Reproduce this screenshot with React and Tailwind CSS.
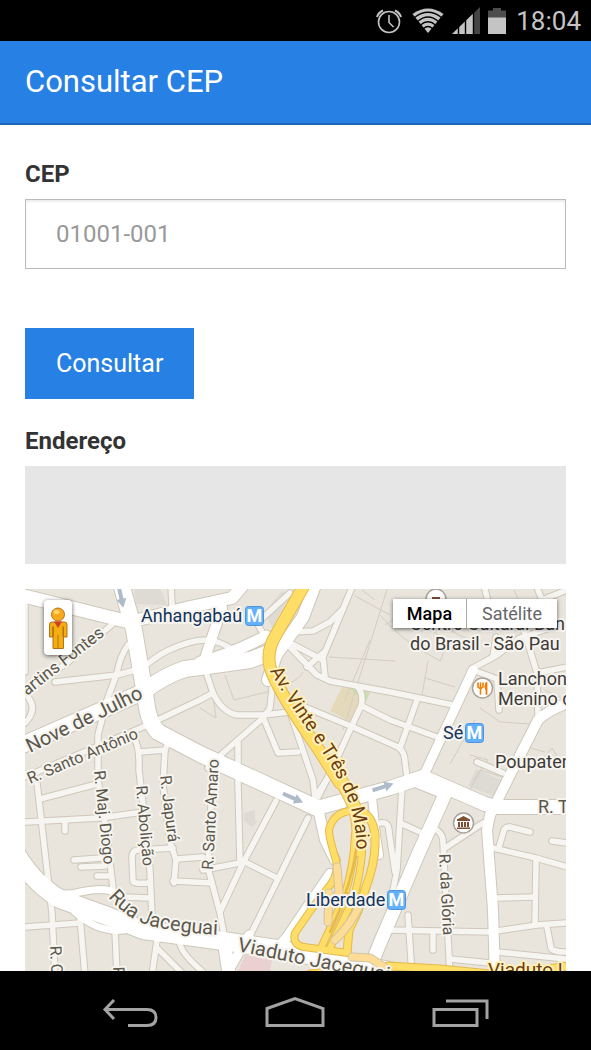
import React, { useState } from 'react';

// Narrow streets, drawn with a thin casing
const streets = [
  'M25 600V672',
  'M115 622L67 663L25 692',
  'M55 682L117 675L143 668Q155 657 167 651Q190 640 205 640Q220 640 236 652',
  'M128 645Q120 656 117 673L107 700L98 735L98 780L107 837L113 888',
  'M28 697Q38 710 25 723',
  'M25 777L143 727L200 700L213 693L207 675',
  'M133 737Q140 745 139 770L144 813L150 870L152 917',
  'M140 752L165 750L170 738',
  'M165 750L163 785L170 842L176 860L174 883',
  'M213 693Q222 712 237 715L263 715L290 712L313 780L315 797',
  'M273 680L270 708L263 718L223 753L208 768',
  'M263 717L278 753L298 752',
  'M238 743V783L240 863',
  'M353 585L323 657L325 677',
  'M288 645L317 675L330 681L390 692L453 705',
  'M290 643L323 660',
  'M307 667L323 653',
  'M290 632L313 631L330 622L343 609',
  'M300 705L353 727L398 747Q405 752 405 762L407 777',
  'M358 687Q364 695 361 706L333 767L318 797',
  'M362 706L390 720L437 737',
  'M417 700L400 748',
  'M290 593L257 623L265 637',
  'M171 585L172 606',
  'M484 585L489 606',
  'M536 585L542 600L567 590',
  'M523 627L537 673L538 717',
  'M537 673L567 667',
  'M473 668L497 655L520 638L556 626',
  'M496 637L493 656',
  'M473 670L497 679L499 710',
  'M477 762L503 773',
  'M25 822L100 818L143 812',
  'M37 783L52 913L55 975',
  'M40 799L97 784',
  'M65 821V831',
  'M74 860L102 858',
  'M81 867L105 866',
  'M97 876L109 876',
  'M173 848L139 850Q132 850 132 857L133 881Q133 884 148 883',
  'M123 897L150 898',
  'M177 859L203 857',
  'M173 881L212 883',
  'M25 927L80 923',
  'M80 917L85 975',
  'M115 930L117 975',
  'M157 940L152 975',
  'M157 948L184 975',
  'M180 944Q182 954 203 972',
  'M276 801L243 863L220 912',
  'M308 818L250 936',
  'M203 870L245 862L277 878',
  'M213 765L208 868L220 913L225 940',
  'M315 797L337 765',
  'M380 823Q389 821 389 832L395 872',
  'M402 787L397 870L393 890',
  'M400 823L420 832',
  'M433 828Q443 832 443 842L445 880L450 975',
  'M445 848L483 823',
  'M387 930L490 932L537 925L567 923',
  'M408 915L412 975',
  'M433 933V950',
  'M450 959L490 963',
  'M493 848L536 858L567 867',
  'M499 847L504 830Q505 827 510 827L530 832',
  'M552 841L567 843',
  'M536 860L535 923',
  'M495 898L535 897',
  'M547 927L551 948Q552 952 567 952',
  'M497 952L567 959',
];

// White avenues: path and stroke width
const avenues = [
  ['M20 595L125 621', 13],
  ['M120 580L134 630L146 700Q148 722 158 732L200 754L317 808', 16],
  ['M20 746L143 692Q165 675 185 669Q215 665 250 660L266 654', 16],
  ['M200 662Q232 654 266 636', 11],
  ['M138 620L190 607L232 598L243 585', 12],
  ['M222 608L205 658', 10],
  ['M315 585L303 617L276 655L268 680', 12],
  ['M317 808L390 788L423 777L485 804L495 807L570 807', 14],
  ['M473 670L423 777', 9],
  ['M447 790L420 850L380 943L365 980', 13],
  ['M413 782L445 795', 8],
  ['M570 702Q547 711 538 720L510 775L490 815L487 830L493 910L495 980', 10],
  ['M318 808L325 840L335 860', 10],
  ['M330 874L288 936L278 948', 10],
  ['M372 797L376 835L379 855', 8],
  ['M10 842Q28 880 60 899L110 917L143 930L223 941L283 950L400 973', 18],
  ['M50 892Q68 896 80 892Q105 887 113 892L134 914', 7],
  ['M75 912Q98 933 124 930', 7],
  ['M224 940L230 980', 13],
  ['M249 935L232 965', 9],
];

// The expressway and its ramps
const highways = [
  ['M306 582L277 633Q266 650 270 667Q277 690 317 747L340 783', 13],
  ['M334 770Q348 790 354 806Q361 826 357 850', 14],
  ['M355 808Q373 814 375 835Q376 855 370 875L358 911L349 930L347 952', 9],
  ['M350 811Q333 813 329 830Q329 838 336 860Q339 872 331 884L313 907L295 933Q292 945 304 947L348 953', 8],
  ['M355 835Q354 865 344 898L321 948', 8],
  ['M362 835Q364 860 354 897L330 948', 8],
  ['M310 974L330 972M388 966L440 969L500 975L570 966', 9],
];

const tunnels = [
  'M337 867L339 893L332 904',
  'M329 893L328 922',
  'M361 903Q350 926 335 940',
  'M352 957L370 958L384 967',
];

const thinLines = [
  'M355 596L390 615M343 730L390 580M329 657L395 661M380 615Q400 640 440 661Q452 640 430 630',
  'M425 678L455 687M428 661L422 695M480 708L500 722L530 724M450 764L475 720M470 755L488 760L474 780',
  'M225 675L234 700L275 690Q300 680 303 672M200 708L216 718L213 695',
  'M395 605L470 640M362 590L375 600M514 590L520 604M545 690L566 700M540 762L552 748L566 770',
  'M385 625L440 590M345 700L370 640M520 745L545 752M470 790L480 770L505 778',
];

const Street = ({ children, size = 16, fill = '#5b574c', weight = 400, ...rest }) => (
  <text
    fontSize={size}
    fill={fill}
    fontWeight={weight}
    stroke="#f6f4ef"
    strokeWidth="4"
    strokeLinejoin="round"
    paintOrder="stroke"
    {...rest}
  >
    {children}
  </text>
);

const Metro = ({ x, y }) => (
  <g transform={`translate(${x} ${y})`}>
    <rect x="0.5" y="0.5" width="18" height="19" rx="3" fill="#63b1fa" stroke="#4a95e0" />
    <text x="9.5" y="16" textAnchor="middle" fontSize="18" fontWeight="700" fill="#fff">M</text>
  </g>
);

const Arrow = ({ x, y, angle }) => (
  <g transform={`translate(${x} ${y}) rotate(${angle})`} fill="#aebbc8">
    <path d="M-11 -2H2V-5L11 0L2 5V2H-11z" />
  </g>
);

const MapDrawing = () => (
  <svg
    className="block h-full w-full"
    viewBox="25 589 541 382"
    preserveAspectRatio="xMidYMin slice"
    fontFamily="Roboto, sans-serif"
    role="img"
    aria-label="Mapa"
  >
    <defs>
      <path id="vinte" d="M270 671Q284 696 311 735Q343 782 350 806Q357 826 357 866" />
      <path id="jaceguai" d="M108 897Q128 920 151 926Q185 934 226 935" />
      <path id="viaduto" d="M237 951Q300 964 396 983" />
    </defs>

    <rect x="25" y="589" width="541" height="382" fill="#e9e5dd" />
    <path d="M134 589H160L167 605L136 604z" fill="#dedad4" />
    <path d="M265 612L282 591L290 594L272 628z" fill="#dedad4" />
    <path d="M342 687L355 690L362 703L353 723L330 711z" fill="#e5d9bb" />
    <path d="M347 687L370 692L366 702L357 695z" fill="#c9dfaf" />
    <path d="M476 769L508 783L500 799L468 786z" fill="#dedad4" />
    <path d="M244 813L255 810V820L257 822L252 827L244 821z" fill="#dedad4" />
    <path d="M245 955L272 960L270 971H238z" fill="#ebd0d2" />

    <g fill="none" stroke="#d2cdbf" strokeWidth="1">
      {thinLines.map((d) => <path key={d} d={d} />)}
    </g>

    <g fill="none" strokeLinecap="round" strokeLinejoin="round">
      {streets.map((d) => <path key={d} d={d} stroke="#cdc8ba" strokeWidth="7.5" />)}
      {avenues.map(([d, w]) => <path key={d} d={d} stroke="#cdc8ba" strokeWidth={w + 2} />)}
      {streets.map((d) => <path key={d} d={d} stroke="#f7f5f1" strokeWidth="5.5" />)}
      {avenues.map(([d, w]) => <path key={d} d={d} stroke="#fff" strokeWidth={w} />)}
      {highways.map(([d, w]) => <path key={d} d={d} stroke="#e5b94b" strokeWidth={w} />)}
      {highways.map(([d, w]) => <path key={d} d={d} stroke="#ffde67" strokeWidth={w - 2} />)}
      <path d="M357 842Q355 868 343 900M347 893L330 932" stroke="#e5b94b" strokeWidth="2.5" />
      {tunnels.map((d) => <path key={d} d={d} stroke="#cfc3a4" strokeWidth="9" />)}
      {tunnels.map((d) => <path key={d} d={d} stroke="#fcdc96" strokeWidth="7" />)}
    </g>

    <Arrow x={121} y={597} angle={78} />
    <Arrow x={293} y={798} angle={24} />
    <Arrow x={383} y={787} angle={-18} />

    <Street size="17" transform="translate(27 696) rotate(-38)">artins Fontes</Street>
    <Street size="20" transform="translate(30 753) rotate(-26)">Nove de Julho</Street>
    <Street transform="translate(30 784) rotate(-23)">R. Santo Antônio</Street>
    <Street transform="translate(94 771) rotate(84)">R. Maj. Diogo</Street>
    <Street transform="translate(136 786) rotate(85)">R. Abolição</Street>
    <Street transform="translate(160 776) rotate(83)">R. Japurá</Street>
    <Street transform="translate(213 870) rotate(-87)">R. Santo Amaro</Street>
    <Street transform="translate(439 854) rotate(87)">R. da Glória</Street>
    <Street transform="translate(50 946) rotate(87)">R. Conde</Street>
    <Street transform="translate(113 967) rotate(87)">Rua</Street>
    <Street size="18" x="538" y="813">R. Tabatinguera</Street>
    <Street size="20"><textPath href="#jaceguai">Rua Jaceguai</textPath></Street>
    <Street size="20"><textPath href="#viaduto">Viaduto Jaceguai</textPath></Street>
    <Street size="19" fill="#6b3d12" stroke="#fff0b8"><textPath href="#vinte">Av. Vinte e Três de Maio</textPath></Street>
    <Street size="19" fill="#6b3d12" stroke="#fff0b8" x="488" y="976">Viaduto Leste</Street>

    <Street size="18" fill="#12335c" x="141" y="622">Anhangabaú</Street>
    <Street size="18" fill="#12335c" x="443" y="739">Sé</Street>
    <Street size="18" fill="#12335c" x="306" y="906">Liberdade</Street>
    <Metro x={245} y={606} />
    <Metro x={465} y={723} />
    <Metro x={387} y={890} />

    <g stroke="#aaa39b" strokeWidth="1.5" fill="#fff">
      <circle cx="436" cy="599" r="10" />
      <circle cx="482.500" cy="688" r="10" />
      <circle cx="463.500" cy="823" r="10" />
    </g>
    <path d="M432 597h8v4h-8z" fill="#7c4f33" />
    <g stroke="#f57c00" fill="none" strokeLinecap="round">
      <path d="M478 683V687Q480.500 690 483 687V683M480.500 683V694" strokeWidth="1.600" />
      <path d="M486.500 683V694" strokeWidth="1.800" />
      <path d="M486 683Q483.500 687 486 690z" fill="#f57c00" />
    </g>
    <g fill="#7c4f33">
      <path d="M463.500 816L470 819.500V821H457V819.500zM458 822h2v5h-2zM461 822h2v5h-2zM464 822h2v5h-2zM467 822h2v5h-2zM457 827.500h13v1.500h-13z" />
    </g>

    <Street size="18" fill="#3d3a38" x="410" y="630">Centro Cultural Ban</Street>
    <Street size="18" fill="#3d3a38" x="410" y="650">do Brasil - São Pau</Street>
    <Street size="18" fill="#3d3a38" x="498" y="685">Lanchon</Street>
    <Street size="18" fill="#3d3a38" x="498" y="705">Menino d</Street>
    <Street size="18" fill="#3d3a38" x="495" y="768">Poupaten</Street>
  </svg>
);

const StatusBar = () => (
  <div className="flex h-[41px] shrink-0 items-center justify-end gap-2 bg-black pr-[10px] text-[#c4c4c4]">
    <svg className="h-[26px] w-[28px]" viewBox="0 0 28 26" fill="none" stroke="currentColor" strokeWidth="1.600">
      <circle cx="13" cy="14" r="10.500" />
      <path d="M13 7V14.500L17.500 19" />
      <path d="M1 9Q2.500 4.500 7 2.500M25 9Q23.500 4.500 19 2.500" strokeWidth="2" />
    </svg>
    <svg className="h-[26px] w-[32px]" viewBox="0 0 32 26">
      <path d="M0.500 6Q16 -5 31.500 6L16 25z" fill="currentColor" />
      <path d="M2.500 9.500Q16 -1 29.500 9.500M5.500 13.500Q16 4.500 26.500 13.500M8.500 17Q16 10.500 23.500 17M11.500 20.500Q16 16.500 20.500 20.500" fill="none" stroke="#000" strokeWidth="1.300" />
    </svg>
    <svg className="h-[27px] w-[28px]" viewBox="0 0 28 27">
      <path d="M0 27L28 0V27z" fill="#454545" />
      <path d="M0 27L21 6.750V27z" fill="currentColor" />
      <path d="M6.500 0V27M13.500 0V27M21.500 0V27" stroke="#000" strokeWidth="1.400" />
    </svg>
    <svg className="h-[26px] w-[18px]" viewBox="0 0 18 26">
      <path d="M5 0H13V2.500H18V10H0V2.500H5z" fill="#4d4d4d" />
      <path d="M0 9.500H18V26H0z" fill="currentColor" />
    </svg>
    <span className="pl-[2px] text-[26px] leading-[32px]">18:04</span>
  </div>
);

const NavBar = () => (
  <nav className="flex h-[79px] shrink-0 items-center justify-center gap-[107px] bg-black">
    <button type="button" aria-label="Voltar">
      <svg className="h-[32px] w-[56px]" viewBox="0 0 56 32" fill="none" stroke="#a3a3a3" strokeWidth="3">
        <path d="M3 14.500H45Q54 14.500 54 22.500Q54 30.500 45 30.500H26" />
        <path d="M12 5L3 14.500L12 24" />
      </svg>
    </button>
    <button type="button" aria-label="Início">
      <svg className="h-[32px] w-[60px]" viewBox="0 0 60 32" fill="none" stroke="#a3a3a3" strokeWidth="3">
        <path d="M2 13.500L30 3.500L58 13.500V30.500H2z" />
      </svg>
    </button>
    <button type="button" aria-label="Recentes">
      <svg className="h-[32px] w-[57px]" viewBox="0 0 57 32" fill="none" stroke="#a3a3a3" strokeWidth="3">
        <path d="M2 14.500H45V30.500H2zM14 6H55V24" />
      </svg>
    </button>
  </nav>
);

const App = () => {
  const [cep, setCep] = useState('');
  const [endereco, setEndereco] = useState('');
  const [mapType, setMapType] = useState('mapa');

  const handleSubmit = (e) => {
    e.preventDefault();
    setEndereco('');
  };

  return (
    <div className="flex h-screen flex-col bg-white font-['Roboto',sans-serif] text-[#333]">
      <StatusBar />
      <header className="flex h-[84px] shrink-0 items-center border-b-2 border-[#1c66b8] bg-[#2780e3] px-[25px]">
        <h1 className="text-[31px] leading-[40px] text-white">Consultar CEP</h1>
      </header>

      <main className="flex min-h-0 flex-1 flex-col px-[25px] pt-8">
        <form onSubmit={handleSubmit} className="flex flex-col items-start">
          <label htmlFor="cep" className="mb-2 text-[24px] leading-[34px] font-bold">CEP</label>
          <input
            id="cep"
            type="text"
            value={cep}
            onChange={(e) => setCep(e.target.value)}
            placeholder="01001-001"
            className="h-[70px] w-full border border-[#bbb] px-[30px] text-[24px] shadow-[inset_0_2px_2px_rgba(0,0,0,0.075)] placeholder:text-[#999]"
          />
          <button type="submit" className="mt-[59px] h-[71px] bg-[#2780e3] px-[31px] text-[25px] text-white">
            Consultar
          </button>
          <label htmlFor="endereco" className="mt-[25px] mb-2 text-[24px] leading-[34px] font-bold">Endereço</label>
          <textarea
            id="endereco"
            readOnly
            value={endereco}
            className="block h-[98px] w-full resize-none bg-[#e6e6e6] px-[30px] py-4 text-[24px]"
          />
        </form>

        <section className="relative mt-[25px] min-h-0 flex-1 overflow-hidden">
          <MapDrawing />
          <button
            type="button"
            aria-label="Street View"
            className="absolute top-[11px] left-[19px] flex h-[55px] w-[28px] items-center justify-center rounded-sm bg-white shadow-[0_1px_4px_rgba(0,0,0,0.6)]"
          >
            <svg className="h-[42px] w-[20px]" viewBox="0 0 20 42" stroke="#b5711b" strokeWidth="1">
              <path d="M3.500 15H16.500Q19 15 19 18V30H15.500V20V41.500H5V20V30H1.500V18Q1.500 15 3.500 15z" fill="#f5ae0f" />
              <path d="M5 19V30M15 19V30M10 28V41" fill="none" />
              <path d="M6 14.500H14L10 21z" fill="#cf3f2a" stroke="none" />
              <circle cx="10" cy="7.500" r="6.500" fill="#f8a91c" />
              <ellipse cx="8.500" cy="5" rx="3" ry="2" fill="#ffd766" stroke="none" />
            </svg>
          </button>
          <div className="absolute top-[10px] right-[9px] flex h-[29px] bg-white text-[18px] shadow-[0_1px_4px_rgba(0,0,0,0.6)]">
            <button type="button" onClick={() => setMapType('mapa')} className={mapType === 'mapa' ? 'w-[73px] font-medium text-black' : 'w-[73px] text-[#666]'}>
              Mapa
            </button>
            <button type="button" onClick={() => setMapType('satelite')} className={mapType === 'satelite' ? 'w-[91px] border-l border-[#aaa] font-medium text-black' : 'w-[91px] border-l border-[#aaa] text-[#666]'}>
              Satélite
            </button>
          </div>
        </section>
      </main>

      <NavBar />
    </div>
  );
};

export default App;
